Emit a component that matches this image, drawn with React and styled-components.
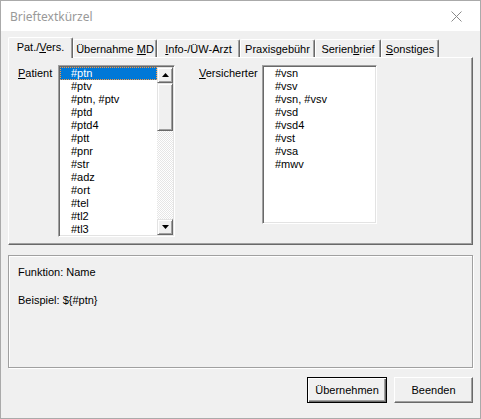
import React from 'react';
import styled, { createGlobalStyle } from 'styled-components';

const GlobalStyle = createGlobalStyle`
  html, body {
    margin: 0;
    padding: 0;
    background: #f0f0f0;
  }
  * {
    box-sizing: border-box;
  }
`;

const Window = styled.div`
  width: 481px;
  height: 419px;
  border: 1px solid #aaaaaa;
  background: #f0f0f0;
  display: flex;
  flex-direction: column;
  font-family: "Liberation Sans", Arial, sans-serif;
  font-size: 11px;
  color: #000;
`;

const TitleBar = styled.div`
  height: 30px;
  background: #fff;
  display: flex;
  align-items: center;
  justify-content: space-between;
  padding: 0 0 0 9px;
`;

const Title = styled.span`
  font-family: "Noto Sans", "Liberation Sans", sans-serif;
  font-size: 12px;
  color: #999;
  margin-top: 1px;
`;

const CloseButton = styled.div`
  width: 46px;
  height: 30px;
  display: flex;
  align-items: center;
  justify-content: center;
  margin-right: 1px;
`;

const Body = styled.div`
  flex: 1;
  display: flex;
  flex-direction: column;
  padding: 6px 7px 0 7px;
`;

const TabStrip = styled.div`
  display: flex;
  align-items: flex-end;
  height: 21px;
  margin-bottom: -1px;
  position: relative;
  z-index: 1;
`;

const Tab = styled.div`
  width: ${p => p.w}px;
  height: ${p => (p.active ? 21 : 18)}px;
  margin-bottom: ${p => (p.active ? 0 : 1)}px;
  background: #f0f0f0;
  border-top: 1px solid #fff;
  border-left: 1px solid #fff;
  border-right: 1px solid #696969;
  box-shadow: inset -1px 0 #a0a0a0;
  border-radius: 2px 2px 0 0;
  display: flex;
  align-items: center;
  justify-content: center;
  padding-bottom: ${p => (p.active ? 2 : 0)}px;
`;

const TabText = styled.span`
  white-space: nowrap;
`;

const Key = styled.span`
  text-decoration: underline;
  text-underline-offset: 1px;
`;

const TabPanel = styled.div`
  height: 188px;
  border-top: 1px solid #fff;
  border-left: 1px solid #fff;
  border-right: 1px solid #696969;
  border-bottom: 1px solid #696969;
  box-shadow: inset -1px -1px #a0a0a0;
  display: flex;
  align-items: flex-start;
  padding: 7px 0 0 9px;
`;

const Field = styled.div`
  display: flex;
  align-items: flex-start;
  margin-right: ${p => p.gap || 0}px;
`;

const Label = styled.div`
  width: ${p => p.w}px;
  line-height: 13px;
  margin-top: 2px;
`;

const ListBox = styled.div`
  width: ${p => p.w}px;
  height: ${p => p.h}px;
  background: #fff;
  border: 1px solid;
  border-color: #a0a0a0 #fff #fff #a0a0a0;
  box-shadow: inset 1px 1px #696969, inset -1px -1px #e3e3e3;
  padding: 1px;
  display: flex;
  overflow: hidden;
`;

const Items = styled.div`
  flex: 1;
  overflow: hidden;
`;

const Item = styled.div`
  height: 13px;
  line-height: 13px;
  padding-left: 11px;
  white-space: nowrap;
  background: ${p => (p.selected ? '#0078d7' : 'transparent')};
  color: ${p => (p.selected ? '#fff' : '#000')};
  outline: ${p => (p.selected ? '1px dotted #ff9a3c' : 'none')};
  outline-offset: -1px;
`;

const ScrollBar = styled.div`
  width: 16px;
  display: flex;
  flex-direction: column;
  background: repeating-conic-gradient(#fff 0 25%, #e6e6e6 0 50%) 0 0 / 2px 2px;
`;

const ScrollButton = styled.div`
  height: ${p => p.h || 16}px;
  flex: none;
  background: #f0f0f0;
  border: 1px solid;
  border-color: #e3e3e3 #696969 #696969 #e3e3e3;
  box-shadow: inset 1px 1px #fff, inset -1px -1px #a0a0a0;
  display: flex;
  align-items: center;
  justify-content: center;
`;

const Track = styled.div`
  flex: 1;
`;

const InfoPanel = styled.div`
  height: 113px;
  margin-top: 10px;
  border: 1px solid #a0a0a0;
  box-shadow: 1px 1px 0 #fff, inset 1px 1px #fff;
  padding: 10px 0 0 9px;
`;

const InfoLine = styled.div`
  line-height: 13px;
  margin-top: ${p => p.top || 0}px;
`;

const ButtonRow = styled.div`
  display: flex;
  justify-content: flex-end;
  gap: 7px;
  margin-top: 9px;
`;

const Button = styled.button`
  width: ${p => p.w}px;
  height: 26px;
  font-family: "Liberation Sans", Arial, sans-serif;
  font-size: 11px;
  color: #000;
  background: #f0f0f0;
  padding: 0;
  border: 1px solid ${p => (p.primary ? '#000' : '#fff')};
  ${p => p.primary
    ? `box-shadow: inset 1px 1px #fff, inset -1px -1px #696969, inset -2px -2px #a0a0a0;`
    : `border-color: #fff #696969 #696969 #fff; box-shadow: inset -1px -1px #a0a0a0;`}
`;

const Arrow = ({ down }) => (
  <svg width="7" height="4" viewBox="0 0 7 4">
    <path d={down ? 'M0 0h7L3.5 4z' : 'M3.5 0L7 4H0z'} fill="#000" />
  </svg>
);

const patientItems = ['#ptn', '#ptv', '#ptn, #ptv', '#ptd', '#ptd4', '#ptt', '#pnr', '#str', '#adz', '#ort', '#tel', '#tl2', '#tl3'];
const versItems = ['#vsn', '#vsv', '#vsn, #vsv', '#vsd', '#vsd4', '#vst', '#vsa', '#mwv'];

const App = () => {
  return (
    <>
      <GlobalStyle />
      <Window>
        <TitleBar>
          <Title>Brieftextkürzel</Title>
          <CloseButton>
            <svg width="11" height="11" viewBox="0 0 11 11">
              <path d="M0.5 0.5L10.5 10.5M10.5 0.5L0.5 10.5" stroke="#8a8a8a" strokeWidth="1" />
            </svg>
          </CloseButton>
        </TitleBar>
        <Body>
          <TabStrip>
            <Tab w={65} active><TabText>Pat./<Key>V</Key>ers.</TabText></Tab>
            <Tab w={84}><TabText>Übernahme <Key>M</Key>D</TabText></Tab>
            <Tab w={83}><TabText><Key>I</Key>nfo-/ÜW-Arzt</TabText></Tab>
            <Tab w={75}><TabText>Praxis<Key>g</Key>ebühr</TabText></Tab>
            <Tab w={66}><TabText>Serien<Key>b</Key>rief</TabText></Tab>
            <Tab w={58}><TabText><Key>S</Key>onstiges</TabText></Tab>
          </TabStrip>
          <TabPanel>
            <Field gap={24}>
              <Label w={40}><Key>P</Key>atient</Label>
              <ListBox w={117} h={172}>
                <Items>
                  {patientItems.map((it, i) => (
                    <Item key={it} selected={i === 0}>{it}</Item>
                  ))}
                </Items>
                <ScrollBar>
                  <ScrollButton><Arrow /></ScrollButton>
                  <ScrollButton h={48} />
                  <Track />
                  <ScrollButton><Arrow down /></ScrollButton>
                </ScrollBar>
              </ListBox>
            </Field>
            <Field>
              <Label w={63}><Key>V</Key>ersicherter</Label>
              <ListBox w={115} h={159}>
                <Items>
                  {versItems.map(it => (
                    <Item key={it}>{it}</Item>
                  ))}
                </Items>
              </ListBox>
            </Field>
          </TabPanel>
          <InfoPanel>
            <InfoLine>Funktion: Name</InfoLine>
            <InfoLine top={15}>Beispiel: ${'{#ptn}'}</InfoLine>
          </InfoPanel>
          <ButtonRow>
            <Button w={80} primary>Übernehmen</Button>
            <Button w={79}>Beenden</Button>
          </ButtonRow>
        </Body>
      </Window>
    </>
  );
};

export default App;
